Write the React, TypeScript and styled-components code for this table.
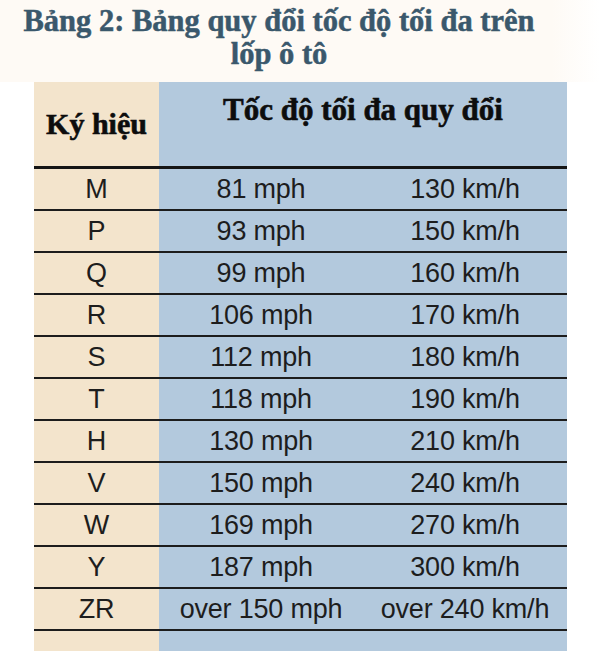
import React from 'react';
import styled, { createGlobalStyle } from 'styled-components';

const GlobalStyle = createGlobalStyle`
	html, body {
		margin: 0;
		padding: 0;
		background: #ffffff;
	}
`;

interface ISpeedRow {
	code: string;
	mph: string;
	kmh: string;
}

const speedRows: ISpeedRow[] = [
	{ code: 'M', mph: '81 mph', kmh: '130 km/h' },
	{ code: 'P', mph: '93 mph', kmh: '150 km/h' },
	{ code: 'Q', mph: '99 mph', kmh: '160 km/h' },
	{ code: 'R', mph: '106 mph', kmh: '170 km/h' },
	{ code: 'S', mph: '112 mph', kmh: '180 km/h' },
	{ code: 'T', mph: '118 mph', kmh: '190 km/h' },
	{ code: 'H', mph: '130 mph', kmh: '210 km/h' },
	{ code: 'V', mph: '150 mph', kmh: '240 km/h' },
	{ code: 'W', mph: '169 mph', kmh: '270 km/h' },
	{ code: 'Y', mph: '187 mph', kmh: '300 km/h' },
	{ code: 'ZR', mph: 'over 150 mph', kmh: 'over 240 km/h' }
];

const Page = styled.div`
	width: 600px;
	height: 669px;
	display: flex;
	flex-direction: column;
	align-items: center;
	background: #ffffff;
`;

const Title = styled.h2`
	margin: 0;
	width: 100%;
	height: 82px;
	box-sizing: border-box;
	padding: 5px 42px 0 0;
	background: linear-gradient(to right, #fefaf5 0 92%, #ffffff 100%);
	text-align: center;
	font-family: 'Liberation Serif', serif;
	font-weight: 700;
	font-size: 30.5px;
	line-height: 33px;
	color: #3a586c;
	-webkit-text-stroke: 0.5px #3a586c;
`;

const Table = styled.div`
	width: 533px;
	margin-left: 1px;
	display: grid;
	grid-template-columns: 125px 1fr;
	background: linear-gradient(to right, #f3e4cc 0 125px, #b3c9dd 125px 100%);
`;

const HeadCell = styled.div<{ top?: boolean }>`
	height: 87px;
	display: flex;
	justify-content: center;
	align-items: ${p => (p.top ? 'flex-start' : 'center')};
	padding-top: ${p => (p.top ? '10px' : '0')};
	box-sizing: border-box;
	font-family: 'Liberation Serif', serif;
	font-weight: 700;
	font-size: ${p => (p.top ? '31px' : '30px')};
	color: #0d0d0d;
	-webkit-text-stroke: 0.6px #0d0d0d;
	border-bottom: 3px solid #151515;
`;

const Row = styled.div`
	grid-column: 1 / -1;
	height: 42px;
	box-sizing: border-box;
	display: grid;
	grid-template-columns: 125px 204px 1fr;
	align-items: center;
	border-bottom: 2px solid #1c1c1c;
`;

const Cell = styled.div`
	text-align: center;
	font-family: 'Liberation Sans', Arial, sans-serif;
	font-size: 27px;
	letter-spacing: -0.2px;
	color: #1d1d1d;
	white-space: nowrap;
`;

const Filler = styled.div`
	grid-column: 1 / -1;
	height: 20px;
`;

const App: React.FC = () => {
	return (
		<Page>
			<GlobalStyle />
			<Title>
				Bảng 2: Bảng quy đổi tốc độ tối đa trên
				<br />
				lốp ô tô
			</Title>
			<Table>
				<HeadCell>Ký hiệu</HeadCell>
				<HeadCell top>Tốc độ tối đa quy đổi</HeadCell>
				{speedRows.map(row => (
					<Row key={row.code}>
						<Cell>{row.code}</Cell>
						<Cell>{row.mph}</Cell>
						<Cell>{row.kmh}</Cell>
					</Row>
				))}
				<Filler />
			</Table>
		</Page>
	);
};

export default App;
